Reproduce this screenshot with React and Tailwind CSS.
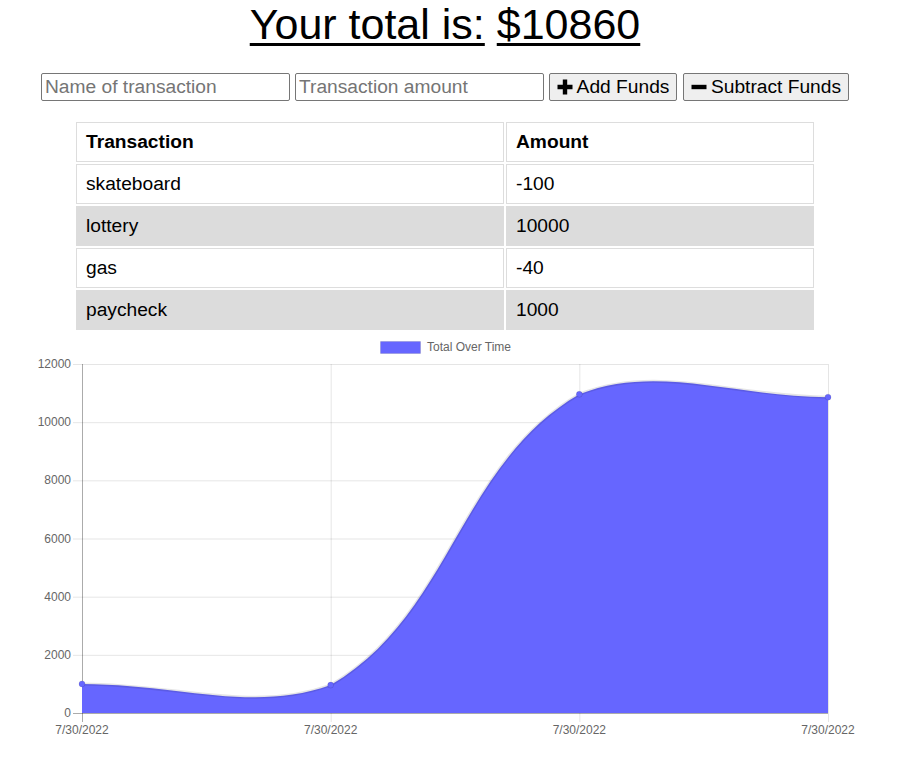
import React from "react";

const transactions = [
  { name: "skateboard", value: -100 },
  { name: "lottery", value: 10000 },
  { name: "gas", value: -40 },
  { name: "paycheck", value: 1000 },
];

// chart area in page pixels
const area = { left: 82, right: 828, top: 364, bottom: 713 };
const maxY = 12000;
const yFor = (v) => area.bottom - (v / maxY) * (area.bottom - area.top);

const splineCurve = (prev, cur, next, t) => {
  const d01 = Math.hypot(cur.x - prev.x, cur.y - prev.y);
  const d12 = Math.hypot(next.x - cur.x, next.y - cur.y);
  let s01 = d01 / (d01 + d12);
  let s12 = d12 / (d01 + d12);
  if (isNaN(s01)) s01 = 0;
  if (isNaN(s12)) s12 = 0;
  const fa = t * s01;
  const fb = t * s12;
  return {
    cp1: { x: cur.x - fa * (next.x - prev.x), y: cur.y - fa * (next.y - prev.y) },
    cp2: { x: cur.x + fb * (next.x - prev.x), y: cur.y + fb * (next.y - prev.y) },
  };
};

const cap = (p) => ({
  x: Math.min(Math.max(p.x, area.left), area.right),
  y: Math.min(Math.max(p.y, area.top), area.bottom),
});

const buildPaths = () => {
  // running totals, oldest first
  const totals = [];
  let sum = 0;
  [...transactions].reverse().forEach((t) => {
    sum += t.value;
    totals.push(sum);
  });
  const step = (area.right - area.left) / (totals.length - 1);
  const pts = totals.map((v, i) => ({ x: area.left + i * step, y: yFor(v) }));
  const ctrl = pts.map((p, i) => {
    const c = splineCurve(pts[i - 1] || p, p, pts[i + 1] || p, 0.4);
    return { cp1: cap(c.cp1), cp2: cap(c.cp2) };
  });
  let line = `M${pts[0].x},${pts[0].y}`;
  for (let i = 1; i < pts.length; i++) {
    const a = ctrl[i - 1].cp2;
    const b = ctrl[i].cp1;
    line += ` C${a.x},${a.y} ${b.x},${b.y} ${pts[i].x},${pts[i].y}`;
  }
  const fill = `${line} L${pts[pts.length - 1].x},${area.bottom} L${pts[0].x},${area.bottom} Z`;
  return { line, fill, pts };
};

const Chart = () => {
  const { line, fill, pts } = buildPaths();
  const yTicks = [0, 2000, 4000, 6000, 8000, 10000, 12000];
  return (
    <svg width="890" height="412" viewBox="0 335 890 412" className="block">
      {/* legend */}
      <rect x="380.5" y="341.5" width="40" height="12" fill="#6666ff" stroke="rgba(0,0,0,0.1)" />
      <text x="427" y="351" fontSize="12" fill="#666" fontFamily="Liberation Sans, Arial, sans-serif">
        Total Over Time
      </text>

      {/* grid */}
      {yTicks.map((v) => (
        <g key={v}>
          <line x1="73" x2={area.right} y1={yFor(v) + 0.5} y2={yFor(v) + 0.5} stroke="rgba(0,0,0,0.1)" />
          <text
            x="71"
            y={yFor(v) + 4}
            textAnchor="end"
            fontSize="12"
            fill="#666"
            fontFamily="Liberation Sans, Arial, sans-serif"
          >
            {v}
          </text>
        </g>
      ))}
      {pts.map((p, i) => (
        <g key={i}>
          <line x1={p.x + 0.5} x2={p.x + 0.5} y1={area.top} y2="722" stroke="rgba(0,0,0,0.1)" />
          <text
            x={p.x}
            y="734"
            textAnchor="middle"
            fontSize="12"
            fill="#666"
            fontFamily="Liberation Sans, Arial, sans-serif"
          >
            7/30/2022
          </text>
        </g>
      ))}
      <line x1={area.left + 0.5} x2={area.left + 0.5} y1={area.top} y2="722" stroke="rgba(0,0,0,0.25)" />
      <line x1="73" x2={area.right} y1={area.bottom + 0.5} y2={area.bottom + 0.5} stroke="rgba(0,0,0,0.25)" />

      {/* data */}
      <path d={fill} fill="#6666ff" />
      <path d={line} fill="none" stroke="rgba(0,0,0,0.1)" strokeWidth="3" />
      {pts.map((p, i) => (
        <circle key={i} cx={p.x} cy={p.y} r="3" fill="#6666ff" stroke="rgba(0,0,0,0.1)" />
      ))}
    </svg>
  );
};

export default function App() {
  return (
    <div className="w-[890px] bg-white text-black font-['Liberation_Sans',Arial,sans-serif]">
      <h1 className="text-center text-[43px] leading-[48px] font-normal">
        <span className="underline decoration-[3px] underline-offset-[4px]">Your total is:</span>{" "}
        <span className="underline decoration-[3px] underline-offset-[4px]">$10860</span>
      </h1>

      <div className="mt-[25px] flex justify-center items-center text-[19.2px]">
        <input
          type="text"
          placeholder="Name of transaction"
          className="w-[249px] h-[28px] border border-[#767676] rounded-[2px] px-[3px] text-[19.2px] placeholder:text-[#757575]"
        />
        <input
          type="text"
          placeholder="Transaction amount"
          className="ml-[5px] w-[249px] h-[28px] border border-[#767676] rounded-[2px] px-[3px] text-[19.2px] placeholder:text-[#757575]"
        />
        <button className="ml-[5px] h-[28px] w-[128px] flex items-center justify-center gap-[4px] bg-[#efefef] border border-[#767676] rounded-[2px] text-[19.2px]">
          <svg width="16" height="16" viewBox="0 0 16 16">
            <path d="M5.8 0.5h4.4v5.3h5.3v4.4h-5.3v5.3H5.8v-5.3H0.5V5.8h5.3z" fill="#000" />
          </svg>
          Add Funds
        </button>
        <button className="ml-[6px] h-[28px] w-[166px] flex items-center justify-center gap-[4px] bg-[#efefef] border border-[#767676] rounded-[2px] text-[19.2px]">
          <svg width="16" height="16" viewBox="0 0 16 16">
            <path d="M0.5 5.8h15v4.4H0.5z" fill="#000" />
          </svg>
          Subtract Funds
        </button>
      </div>

      <div className="mt-[21px] flex justify-center">
        <div className="grid grid-cols-[428px_308px] gap-[2px] text-[19.2px] leading-[22px]">
          <div className="border border-[#dddddd] py-[8px] pl-[9px] font-bold">Transaction</div>
          <div className="border border-[#dddddd] py-[8px] pl-[9px] font-bold">Amount</div>
          {transactions.map((t, i) => (
            <React.Fragment key={t.name}>
              <div
                className={
                  i % 2 === 1
                    ? "border border-[#dcdcdc] bg-[#dcdcdc] py-[8px] pl-[9px]"
                    : "border border-[#dddddd] py-[8px] pl-[9px]"
                }
              >
                {t.name}
              </div>
              <div
                className={
                  i % 2 === 1
                    ? "border border-[#dcdcdc] bg-[#dcdcdc] py-[8px] pl-[9px]"
                    : "border border-[#dddddd] py-[8px] pl-[9px]"
                }
              >
                {t.value}
              </div>
            </React.Fragment>
          ))}
        </div>
      </div>

      <div className="mt-[5px]">
        <Chart />
      </div>
    </div>
  );
}
